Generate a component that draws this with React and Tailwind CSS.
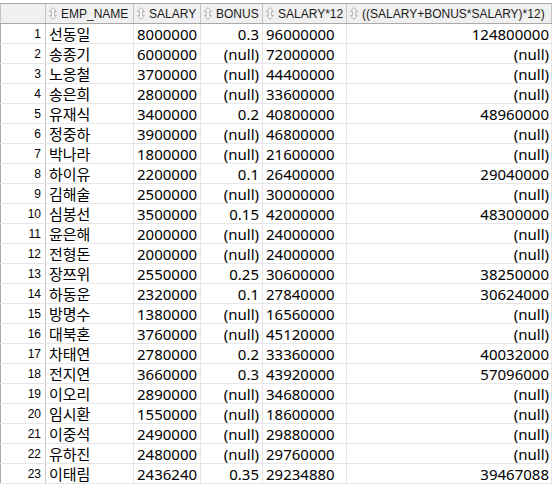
const rows = [
  ['선동일', '8000000', '0.3', '96000000', '124800000'],
  ['송종기', '6000000', '(null)', '72000000', '(null)'],
  ['노옹철', '3700000', '(null)', '44400000', '(null)'],
  ['송은희', '2800000', '(null)', '33600000', '(null)'],
  ['유재식', '3400000', '0.2', '40800000', '48960000'],
  ['정중하', '3900000', '(null)', '46800000', '(null)'],
  ['박나라', '1800000', '(null)', '21600000', '(null)'],
  ['하이유', '2200000', '0.1', '26400000', '29040000'],
  ['김해술', '2500000', '(null)', '30000000', '(null)'],
  ['심봉선', '3500000', '0.15', '42000000', '48300000'],
  ['윤은해', '2000000', '(null)', '24000000', '(null)'],
  ['전형돈', '2000000', '(null)', '24000000', '(null)'],
  ['장쯔위', '2550000', '0.25', '30600000', '38250000'],
  ['하동운', '2320000', '0.1', '27840000', '30624000'],
  ['방명수', '1380000', '(null)', '16560000', '(null)'],
  ['대북혼', '3760000', '(null)', '45120000', '(null)'],
  ['차태연', '2780000', '0.2', '33360000', '40032000'],
  ['전지연', '3660000', '0.3', '43920000', '57096000'],
  ['이오리', '2890000', '(null)', '34680000', '(null)'],
  ['임시환', '1550000', '(null)', '18600000', '(null)'],
  ['이중석', '2490000', '(null)', '29880000', '(null)'],
  ['유하진', '2480000', '(null)', '29760000', '(null)'],
  ['이태림', '2436240', '0.35', '29234880', '39467088'],
];

function SortIcon() {
  return (
    <svg width="8" height="13" viewBox="0 0 8 13" className="mr-[4px] shrink-0">
      <polygon
        points="4,0.5 7.5,4.5 5.5,4.5 5.5,8.5 7.5,8.5 4,12.5 0.5,8.5 2.5,8.5 2.5,4.5 0.5,4.5"
        fill="#f7f7f7"
        stroke="#b4b4b4"
        strokeWidth="1"
      />
    </svg>
  );
}

function HeadCell({ w, children }) {
  return (
    <div className={`${w} flex h-full items-center border-r border-[#c4c4c4] pl-[3px] text-[12px] text-[#1a1a1a]`}>
      <SortIcon />
      <span className="whitespace-nowrap">{children}</span>
    </div>
  );
}

export default function App() {
  return (
    <div className="h-[489px] w-[554px] overflow-hidden bg-white pt-[3px] font-['Noto_Sans','Noto_Sans_CJK_KR',sans-serif]">
      <div className="flex h-[21px] w-[552px] border-y border-[#a9a9a9] bg-[#f0f0f0] font-['Liberation_Sans',sans-serif]">
        <div className="h-full w-[46px] border-r border-l border-[#c4c4c4]" />
        <HeadCell w="w-[88px]">EMP_NAME</HeadCell>
        <HeadCell w="w-[67px]">SALARY</HeadCell>
        <HeadCell w="w-[62px]">BONUS</HeadCell>
        <HeadCell w="w-[84px]">SALARY*12</HeadCell>
        <HeadCell w="w-[205px]">((SALARY+BONUS*SALARY)*12)</HeadCell>
      </div>
      {rows.map((r, i) => (
        <div key={i} className="flex h-[20px] w-[552px] border-b border-[#e6e6e6] text-[15px] leading-[20px] text-black">
          <div className="w-[46px] border-r border-l border-l-[#a9a9a9] border-r-[#c8c8c8] pr-[4px] text-right font-['Liberation_Sans',sans-serif] text-[12px]">
            {i + 1}
          </div>
          <div className="w-[88px] border-r border-[#e6e6e6] pl-[3px] whitespace-nowrap">{r[0]}</div>
          <div className="w-[67px] border-r border-[#e6e6e6] pl-[3px]">{r[1]}</div>
          <div className="w-[62px] border-r border-[#e6e6e6] pr-[3px] text-right">{r[2]}</div>
          <div className="w-[84px] border-r border-[#e6e6e6] pl-[3px]">{r[3]}</div>
          <div className="w-[205px] border-r border-[#e6e6e6] pr-[2px] text-right">{r[4]}</div>
        </div>
      ))}
    </div>
  );
}
